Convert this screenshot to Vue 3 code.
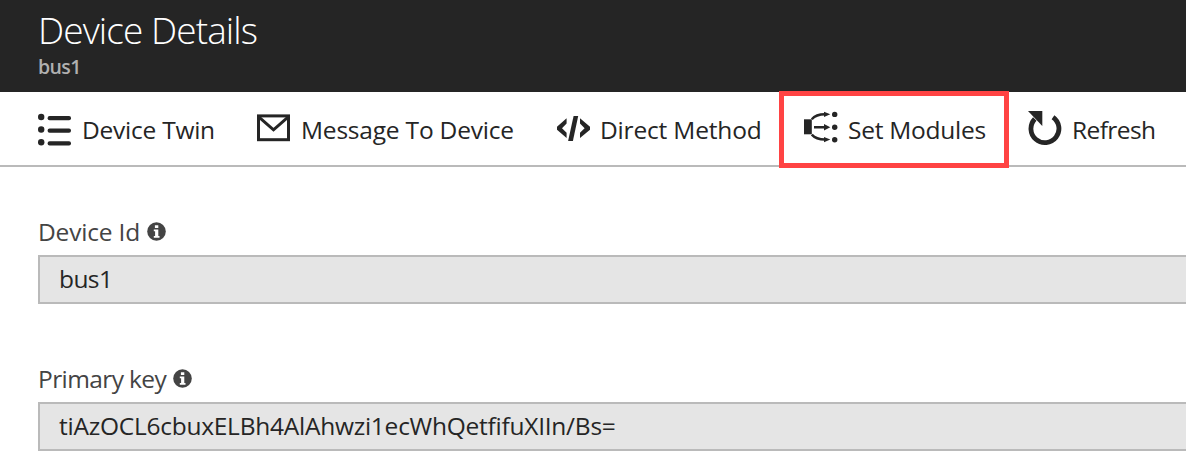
<script setup>
const fields = [
  { id: 'device', label: 'Device Id', value: 'bus1' },
  { id: 'key', label: 'Primary key', value: 'tiAzOCL6cbuxELBh4AlAhwzi1ecWhQetfifuXIIn/Bs=' },
]
</script>

<template>
  <div class="blade">
    <header class="header">
      <h1>Device Details</h1>
      <p>bus1</p>
    </header>

    <nav class="toolbar">
      <button class="command twin">
        <svg width="34" height="34" viewBox="0 0 34 34">
          <g fill="#252525">
            <circle cx="3.2" cy="5" r="3.2" />
            <circle cx="3.2" cy="17.5" r="3.2" />
            <circle cx="3.2" cy="30.2" r="3.2" />
            <rect x="9.6" y="4" width="23.4" height="4.2" rx="2" />
            <rect x="9.6" y="16.6" width="23.4" height="4.2" rx="2" />
            <rect x="9.6" y="29.2" width="23.4" height="4.2" rx="2" />
          </g>
        </svg>
        <span>Device Twin</span>
      </button>
      <button class="command message">
        <svg width="34" height="34" viewBox="0 0 34 34">
          <g fill="none" stroke="#252525" stroke-width="3">
            <rect x="2.5" y="3.9" width="30" height="23.8" />
            <path d="M2.7 4.8 17.5 17.8 32.3 4.8" />
          </g>
        </svg>
        <span>Message To Device</span>
      </button>
      <button class="command method">
        <svg width="34" height="34" viewBox="0 0 34 34">
          <g fill="#252525">
            <path d="M10.6 6.2v5.4L6 16.2l4.6 4.5v5.4L1 17.7v-3z" />
            <path d="M24 6.2v5.4l4.6 4.6-4.6 4.5v5.4l10-8.4v-3z" />
            <path d="M17.6 4h4.6l-5.3 25h-4.8z" />
          </g>
        </svg>
        <span>Direct Method</span>
      </button>
      <button class="command modules">
        <svg width="34" height="34" viewBox="0 0 34 34">
          <g fill="#252525">
            <rect x="0" y="10.3" width="7.8" height="15" />
            <circle cx="30.7" cy="5.4" r="2.7" />
            <circle cx="30.7" cy="18.3" r="2.7" />
            <circle cx="30.7" cy="30.7" r="2.7" />
            <path d="M20 2.7 26.3 5.3 20 8zM20 15 26.3 18.2 20 21.5zM20 28 26.3 30.5 20 33.2z" />
          </g>
          <g fill="none" stroke="#252525" stroke-width="2.4">
            <path d="M7.8 10.3C11 6.4 14.6 5.3 21 5.3M10 18.2H21M7.8 25.6C11 29.3 14.6 30.5 21 30.5" />
          </g>
        </svg>
        <span>Set Modules</span>
      </button>
      <button class="command refresh">
        <svg width="34" height="36" viewBox="0 0 34 36">
          <path d="M25 7.2A14 14 0 1 1 6.8 9" fill="none" stroke="#252525" stroke-width="4.8" />
          <path d="M0 1H14.3v15z" fill="#252525" />
        </svg>
        <span>Refresh</span>
      </button>
    </nav>

    <main class="form">
      <section v-for="f in fields" :key="f.id" class="field" :class="f.id">
        <div class="caption">
          <span>{{ f.label }}</span>
          <svg width="19" height="19" viewBox="0 0 19 19">
            <circle cx="9.5" cy="9.5" r="9.3" fill="#444" />
            <path d="M7.9 3.2h3.4v2.7H7.9zM6.8 7.5h4.5v6.4h1.2v1.8H6.8v-1.8h1.3V9.2H6.8z" fill="#fff" />
          </svg>
        </div>
        <div class="value"><span>{{ f.value }}</span></div>
      </section>
    </main>
  </div>
</template>

<style>
body {
  margin: 0;
  background: #fff;
}
</style>

<style scoped>
.blade {
  height: 467px;
  overflow: hidden;
  background: #fff;
  color: #252525;
  font-family: "Open Sans", "Noto Sans", sans-serif;
  font-size: 24.5px;
}
.header {
  box-sizing: border-box;
  height: 92px;
  padding: 8px 0 0 38px;
  background: #252525;
}
h1 {
  margin: 0;
  color: #fff;
  font-size: 37px;
  font-weight: 300;
  line-height: 44px;
  letter-spacing: -0.9px;
}
p {
  margin: 0;
  color: #b0b0b0;
  font-size: 19.5px;
  font-weight: 600;
  line-height: 30px;
  letter-spacing: -0.6px;
}
.toolbar {
  display: flex;
  height: 73px;
  padding-left: 38px;
  border-bottom: 2px solid #bababa;
}
.command {
  box-sizing: border-box;
  display: flex;
  flex: none;
  align-items: center;
  margin: 0;
  padding: 0;
  border: 0;
  background: none;
  color: inherit;
  font: inherit;
  white-space: nowrap;
}
.command svg {
  flex: none;
}
.command span {
  margin-top: 2px;
}
.twin {
  width: 218px;
  gap: 10px;
  letter-spacing: -0.24px;
}
.message {
  width: 300px;
  gap: 11px;
  letter-spacing: -0.2px;
}
.method {
  width: 223px;
  gap: 10px;
  letter-spacing: -0.18px;
}
.modules {
  width: 230px;
  height: 77px;
  margin-top: -1px;
  padding: 0 0 2px 20px;
  gap: 10px;
  border: 5px solid #ff4343;
  background: #fff;
  letter-spacing: -0.25px;
}
.modules svg {
  margin-bottom: 5px;
}
.refresh {
  margin-left: 19px;
  gap: 10px;
  letter-spacing: -0.6px;
}
.refresh svg {
  margin-bottom: 2px;
}
.form {
  padding: 50px 0 0 38px;
}
.field {
  height: 147px;
}
.caption {
  display: flex;
  height: 38px;
  gap: 7px;
  color: #444;
  line-height: 30px;
}
.caption svg {
  margin-top: 5px;
}
.device .caption {
  letter-spacing: -0.18px;
}
.key .caption {
  letter-spacing: -0.6px;
}
.value {
  box-sizing: border-box;
  height: 49px;
  padding-left: 19px;
  border: 2px solid #bababa;
  border-right: 0;
  background: #e5e5e5;
  line-height: 43px;
}
.device .value {
  letter-spacing: -0.6px;
}
.key .value {
  letter-spacing: -0.25px;
}
</style>
